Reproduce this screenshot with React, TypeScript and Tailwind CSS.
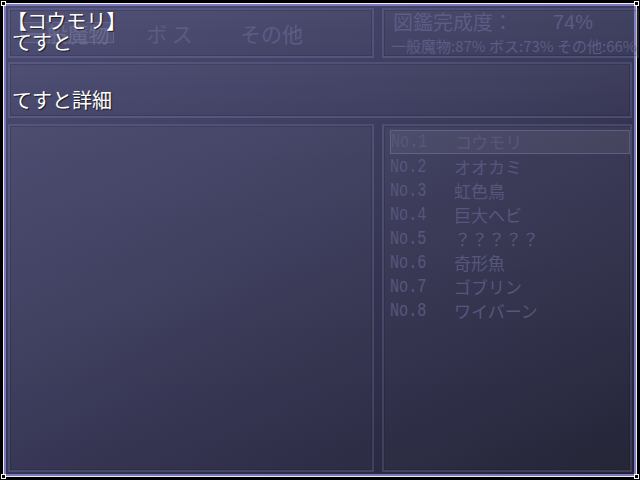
import React from "react";

const jp = "font-['Noto_Sans_CJK_JP','Noto_Sans',sans-serif]";

const monsters = [
  "コウモリ",
  "オオカミ",
  "虹色鳥",
  "巨大ヘビ",
  "？？？？？",
  "奇形魚",
  "ゴブリン",
  "ワイバーン",
];

function Corner({ cls }: { cls: string }) {
  return (
    <div className={`absolute w-[5px] h-[5px] bg-white p-[1px] ${cls}`}>
      <div className="w-full h-full bg-black" />
    </div>
  );
}

function Panel({ className = "", children }: { className?: string; children?: React.ReactNode }) {
  return (
    <div
      className={`relative border-2 border-[#8a8ac0]/20 bg-[linear-gradient(180deg,rgba(255,255,255,0.035),rgba(255,255,255,0.01))] shadow-[inset_0_0_0_1px_rgba(20,20,40,0.2)] ${className}`}
    >
      {children}
    </div>
  );
}

export default function App() {
  return (
    <div className={`relative w-[640px] h-[480px] bg-black p-[3px] overflow-hidden ${jp}`}>
      <div className="w-full h-full border border-[#ececf4]">
        <div className="w-full h-full border-2 border-[#7c7abc] bg-[linear-gradient(150deg,#4b4b72_0%,#3f3f62_35%,#2f2f4a_70%,#222235_100%)] p-[2px] flex flex-col gap-[4px]">
          {/* top row */}
          <div className="flex gap-[8px] h-[50px] shrink-0">
            <Panel className="w-[366px] shrink-0">
              <div className="flex pt-[12px] pl-[11px] gap-[9px] text-[21px] leading-[24px] text-[#5c5c84]">
                <div className="w-[93px] h-[21px] flex items-center justify-center border border-[#7070a0]/60 bg-white/[0.04] text-[#6a6a90]">
                  一般魔物
                </div>
                <div className="w-[93px] h-[21px] flex items-center justify-center">ボ ス</div>
                <div className="w-[93px] h-[21px] flex items-center justify-center">その他</div>
              </div>
              <div className="absolute left-[2px] top-[0px] text-[20px] leading-[21px] text-white [text-shadow:1px_1px_1px_rgba(0,0,0,0.7)] whitespace-nowrap">
                <div className="-ml-[5px]">【コウモリ】</div>
                <div>てすと</div>
              </div>
            </Panel>
            <Panel className="flex-1 overflow-visible">
              <div className="pl-[9px] pt-[0px] text-[#5c5c84] whitespace-nowrap">
                <div className="flex text-[20px] leading-[24px]">
                  <span className="w-[160px]">図鑑完成度：</span>
                  <span className="font-['Liberation_Sans',sans-serif]">74%</span>
                </div>
                <div className="text-[15px] leading-[20px] mt-[2px] -ml-[2px]">
                  一般魔物:87% ボス:73% その他:66%
                </div>
              </div>
            </Panel>
          </div>

          {/* middle */}
          <Panel className="h-[56px] shrink-0 mb-[2px]">
            <div className="absolute left-[2px] top-[24px] text-[20px] leading-[24px] text-white [text-shadow:1px_1px_1px_rgba(0,0,0,0.7)]">
              てすと詳細
            </div>
          </Panel>

          {/* bottom */}
          <div className="flex gap-[8px] flex-1">
            <Panel className="w-[366px] shrink-0" />
            <Panel className="flex-1">
              <div className="pt-[4px] pl-[6px] pr-0">
                {monsters.map((m, i) => (
                  <div
                    key={i}
                    className={`flex items-center h-[24px] text-[#57577d] ${
                      i === 0 ? "border border-[#7878a6]/50 bg-white/[0.05] h-[23px] mb-[1px]" : ""
                    }`}
                  >
                    <span className="w-[64px] shrink-0 font-['Liberation_Mono',monospace] text-[21px] leading-[22px] scale-x-[0.72] origin-left inline-block whitespace-nowrap">
                      No.{i + 1}
                    </span>
                    <span className="text-[17px] leading-[22px] whitespace-nowrap">{m}</span>
                  </div>
                ))}
              </div>
            </Panel>
          </div>
        </div>
      </div>
      <Corner cls="left-[1px] top-[1px]" />
      <Corner cls="right-[1px] top-[1px]" />
      <Corner cls="left-[1px] bottom-[1px]" />
      <Corner cls="right-[1px] bottom-[1px]" />
    </div>
  );
}
